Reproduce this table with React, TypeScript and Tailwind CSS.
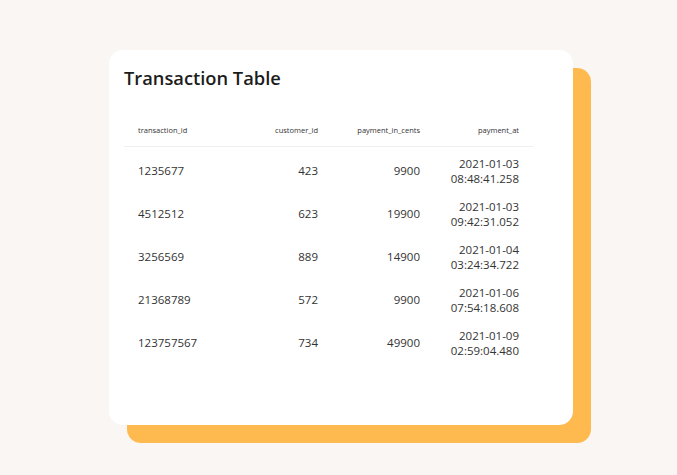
import React from "react";

const rows = [
  { id: "1235677", customer: "423", cents: "9900", date: "2021-01-03", time: "08:48:41.258" },
  { id: "4512512", customer: "623", cents: "19900", date: "2021-01-03", time: "09:42:31.052" },
  { id: "3256569", customer: "889", cents: "14900", date: "2021-01-04", time: "03:24:34.722" },
  { id: "21368789", customer: "572", cents: "9900", date: "2021-01-06", time: "07:54:18.608" },
  { id: "123757567", customer: "734", cents: "49900", date: "2021-01-09", time: "02:59:04.480" },
];

const cols = "grid grid-cols-[104px_104px_102px_99px]";

export default function App() {
  return (
    <div className="w-[677px] h-[475px] bg-[#faf6f3] pt-[50px] pl-[109px]" style={{ fontFamily: '"Open Sans", "Noto Sans", sans-serif' }}>
      <div className="w-[464px] h-[375px] rounded-[14px] bg-white shadow-[18px_18px_0_0_#ffba4f] pt-[15px] px-[15px]">
        <h1 className="text-[18.3px] leading-[26px] font-semibold text-[#1c1c1c]">Transaction Table</h1>
        <div className="w-[409px] mt-[25px]">
          <div className={`${cols} h-[31px] items-center border-b border-[#efefef] text-[7.5px] text-[#333]`}>
            <div className="pl-[14px]">transaction_id</div>
            <div className="pr-[14px] text-right">customer_id</div>
            <div className="pr-[14px] text-right">payment_in_cents</div>
            <div className="pr-[14px] text-right">payment_at</div>
          </div>
          <div className="pt-[2px]">
            {rows.map((r) => (
              <div key={r.id} className={`${cols} h-[43px] items-center text-[11.5px] leading-[15px] text-[#333]`}>
                <div className="pl-[14px]">{r.id}</div>
                <div className="pr-[14px] text-right">{r.customer}</div>
                <div className="pr-[14px] text-right">{r.cents}</div>
                <div className="pr-[14px] text-right">
                  <div>{r.date}</div>
                  <div>{r.time}</div>
                </div>
              </div>
            ))}
          </div>
        </div>
      </div>
    </div>
  );
}
